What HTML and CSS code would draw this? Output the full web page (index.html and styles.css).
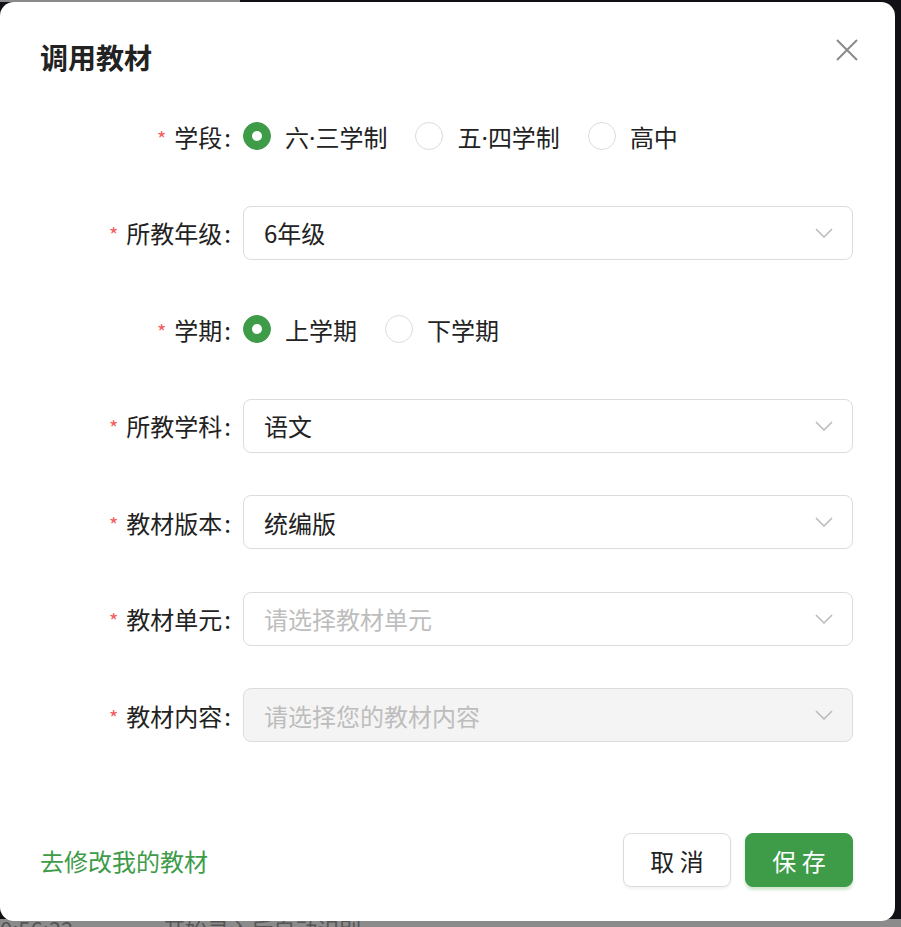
FILE: index.html
```html
<!DOCTYPE html>
<html lang="zh-CN">

<head>
  <meta charset="UTF-8">
  <meta name="viewport" content="width=device-width, initial-scale=1.0">
  <title>调用教材</title>
  <link rel="stylesheet" href="styles.css">
</head>

<body>
  <div class="backdrop">
    <div class="backdrop-top">
      <div class="backdrop-top-left"></div>
    </div>
    <div class="backdrop-bottom">
      <span class="backdrop-time">0:56:32</span>
      <span class="backdrop-text">开始录入后自动识别</span>
    </div>
  </div>

  <div class="modal">
    <div class="modal-header">
      <h2 class="modal-title">调用教材</h2>
      <button class="modal-close" aria-label="关闭">
        <svg width="24" height="24" viewBox="0 0 24 24">
          <path d="M2 2 L22 22 M22 2 L2 22" stroke="#8a8a8a" stroke-width="2" fill="none" />
        </svg>
      </button>
    </div>

    <form class="form">
      <div class="form-item">
        <label class="form-label"><span class="required">*</span>学段<span class="colon">:</span></label>
        <div class="radio-group">
          <label class="radio checked"><span class="radio-dot"></span><span>六<span class="dot">·</span>三学制</span></label>
          <label class="radio"><span class="radio-dot"></span><span>五<span class="dot">·</span>四学制</span></label>
          <label class="radio"><span class="radio-dot"></span><span>高中</span></label>
        </div>
      </div>

      <div class="form-item">
        <label class="form-label"><span class="required">*</span>所教年级<span class="colon">:</span></label>
        <div class="select">
          <span class="select-value">6年级</span>
          <svg class="select-arrow" width="18" height="10" viewBox="0 0 18 10">
            <path d="M1 1 L9 9 L17 1" />
          </svg>
        </div>
      </div>

      <div class="form-item">
        <label class="form-label"><span class="required">*</span>学期<span class="colon">:</span></label>
        <div class="radio-group">
          <label class="radio checked"><span class="radio-dot"></span><span>上学期</span></label>
          <label class="radio"><span class="radio-dot"></span><span>下学期</span></label>
        </div>
      </div>

      <div class="form-item">
        <label class="form-label"><span class="required">*</span>所教学科<span class="colon">:</span></label>
        <div class="select">
          <span class="select-value">语文</span>
          <svg class="select-arrow" width="18" height="10" viewBox="0 0 18 10">
            <path d="M1 1 L9 9 L17 1" />
          </svg>
        </div>
      </div>

      <div class="form-item">
        <label class="form-label"><span class="required">*</span>教材版本<span class="colon">:</span></label>
        <div class="select">
          <span class="select-value">统编版</span>
          <svg class="select-arrow" width="18" height="10" viewBox="0 0 18 10">
            <path d="M1 1 L9 9 L17 1" />
          </svg>
        </div>
      </div>

      <div class="form-item">
        <label class="form-label"><span class="required">*</span>教材单元<span class="colon">:</span></label>
        <div class="select">
          <span class="select-value placeholder">请选择教材单元</span>
          <svg class="select-arrow" width="18" height="10" viewBox="0 0 18 10">
            <path d="M1 1 L9 9 L17 1" />
          </svg>
        </div>
      </div>

      <div class="form-item">
        <label class="form-label"><span class="required">*</span>教材内容<span class="colon">:</span></label>
        <div class="select disabled">
          <span class="select-value placeholder">请选择您的教材内容</span>
          <svg class="select-arrow" width="18" height="10" viewBox="0 0 18 10">
            <path d="M1 1 L9 9 L17 1" />
          </svg>
        </div>
      </div>
    </form>

    <div class="modal-footer">
      <a href="#" class="edit-link">去修改我的教材</a>
      <div class="footer-buttons">
        <button class="btn btn-default">取 消</button>
        <button class="btn btn-primary">保 存</button>
      </div>
    </div>
  </div>
</body>

</html>
```

FILE: styles.css
```css
* {
  box-sizing: border-box;
  margin: 0;
  padding: 0;
}

body {
  font-family: "Noto Sans CJK SC", "Noto Sans", sans-serif;
  background: #111115;
  width: 901px;
  height: 927px;
  overflow: hidden;
  position: relative;
  color: #222;
}

/* page behind the dialog */
.backdrop {
  height: 100%;
  display: flex;
  flex-direction: column;
  justify-content: space-between;
}

.backdrop-top {
  height: 2px;
  display: flex;
}

.backdrop-top-left {
  width: 240px;
  background: #8a8a8a;
}

.backdrop-bottom {
  height: 8px;
  background: #8b8b8b;
  overflow: hidden;
  display: flex;
  gap: 90px;
  font-size: 22px;
  line-height: 22px;
  color: #555;
}

.backdrop-time {
  margin-top: -2px;
}

.backdrop-text {
  margin-top: -2px;
}

/* dialog */
.modal {
  position: absolute;
  left: 0;
  top: 2px;
  width: 895px;
  height: 919px;
  background: #fff;
  border-radius: 14px;
  padding: 0 42px 34px 40px;
  display: flex;
  flex-direction: column;
}

.modal-header {
  display: flex;
  justify-content: space-between;
  align-items: flex-start;
  padding-top: 35px;
  margin-right: -6px;
}

.modal-title {
  font-size: 28px;
  line-height: 40px;
  font-weight: 700;
  color: #222;
}

.modal-close {
  border: none;
  background: none;
  width: 24px;
  height: 24px;
  margin-top: 1px;
  cursor: pointer;
}

.modal-close svg {
  display: block;
}

.form {
  margin-top: 32px;
  display: flex;
  flex-direction: column;
  gap: 42.5px;
}

.form-item {
  display: grid;
  grid-template-columns: 192px 1fr;
  column-gap: 11px;
  height: 54px;
  align-items: center;
}

.form-label {
  text-align: right;
  font-size: 24px;
  color: #222;
  white-space: nowrap;
}

.colon {
  margin-left: 2px;
  margin-right: 1px;
}

.required {
  color: #f25c5c;
  font-size: 20px;
  margin-right: 8px;
}

.radio-group {
  display: flex;
  align-items: center;
  gap: 28px;
}

.radio {
  display: flex;
  align-items: center;
  gap: 14px;
  font-size: 24px;
  color: #222;
  cursor: pointer;
  white-space: nowrap;
}

.dot {
  font-family: "Noto Sans", sans-serif;
}

.radio-dot {
  width: 28px;
  height: 28px;
  border-radius: 50%;
  border: 1px solid #dcdcdc;
  background: #fff;
  display: flex;
  align-items: center;
  justify-content: center;
}

.radio.checked .radio-dot {
  background: #3e9b48;
  border-color: #3e9b48;
}

.radio.checked .radio-dot::after {
  content: "";
  width: 10px;
  height: 10px;
  border-radius: 50%;
  background: #fff;
}

.select {
  height: 54px;
  border: 1px solid #dcdcdc;
  border-radius: 8px;
  padding: 0 19px 0 20px;
  display: flex;
  align-items: center;
  justify-content: space-between;
  background: #fff;
}

.select.disabled {
  background: #f4f4f4;
}

.select-value {
  font-size: 24px;
  color: #222;
}

.select-value.placeholder {
  color: #bdbdbd;
}

.select-arrow path {
  fill: none;
  stroke: #bcbcbc;
  stroke-width: 1.6;
}

.modal-footer {
  margin-top: auto;
  display: flex;
  justify-content: space-between;
  align-items: center;
}

.edit-link {
  font-size: 24px;
  color: #3e9b48;
  text-decoration: none;
}

.footer-buttons {
  display: flex;
  gap: 14px;
}

.btn {
  width: 108px;
  height: 54px;
  border-radius: 8px;
  font-family: inherit;
  font-size: 24px;
  cursor: pointer;
}

.btn-default {
  background: #fff;
  border: 1px solid #dcdcdc;
  color: #222;
  box-shadow: 0 2px 3px rgba(0, 0, 0, 0.05);
}

.btn-primary {
  background: #3e9b48;
  border: 1px solid #3e9b48;
  color: #fff;
  box-shadow: 0 3px 3px rgba(62, 155, 72, 0.25);
}
```
